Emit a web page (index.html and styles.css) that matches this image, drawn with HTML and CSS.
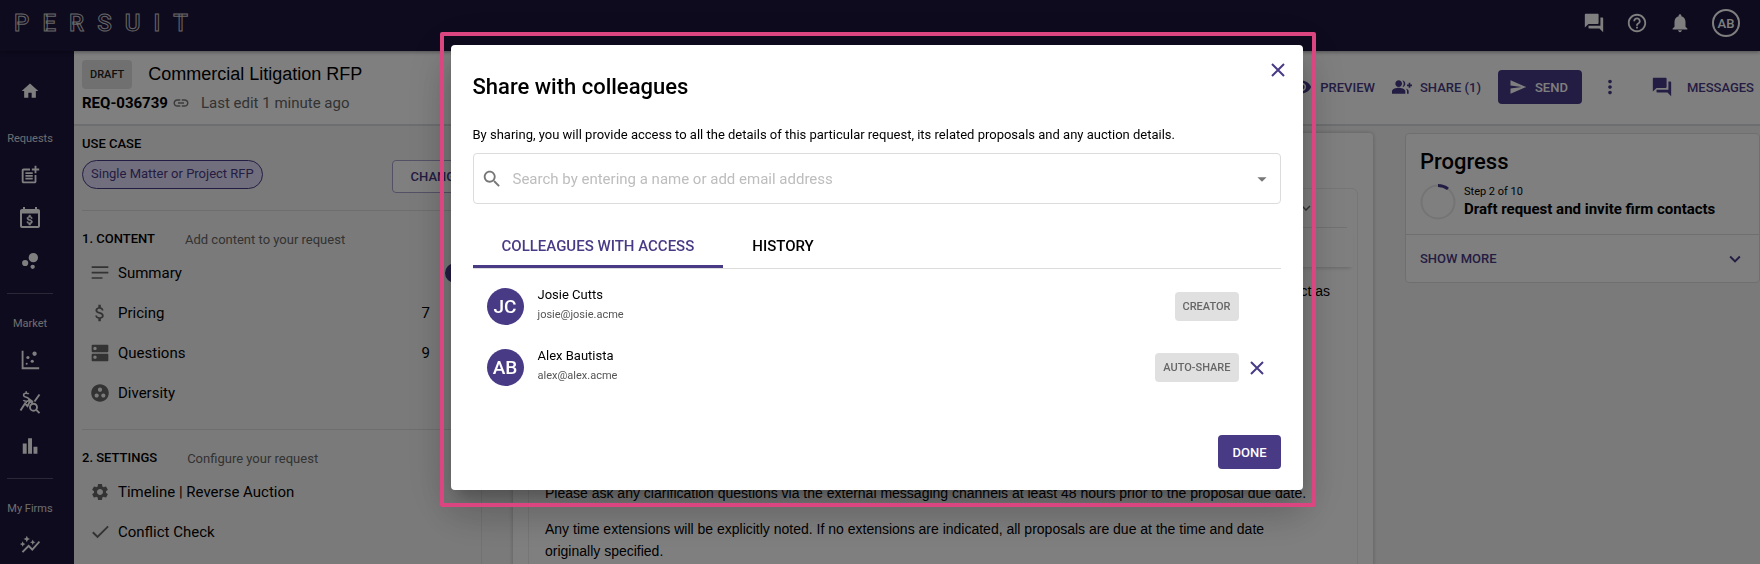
FILE: index.html
```html
<!DOCTYPE html>
<html lang="en">
<head>
<meta charset="utf-8">
<title>Commercial Litigation RFP</title>
<link rel="stylesheet" href="styles.css">
</head>
<body>
<header class="appbar">
  <div class="logo" role="img" aria-label="Persuit"><span>P</span><span>E</span><span>R</span><span>S</span><span>U</span><span>I</span><span>T</span></div>
  <div class="appbar-tools">
    <button class="icon-btn" aria-label="Chat"><svg class="i22" viewBox="0 0 24 24"><path d="M21 6h-2v9H6v2c0 .55.45 1 1 1h11l4 4V7c0-.55-.45-1-1-1zm-4 6V3c0-.55-.45-1-1-1H3c-.55 0-1 .45-1 1v14l4-4h10c.55 0 1-.45 1-1z"/></svg></button>
    <button class="icon-btn" aria-label="Help"><svg class="i22" viewBox="0 0 24 24"><path d="M11 18h2v-2h-2v2zm1-16C6.48 2 2 6.48 2 12s4.48 10 10 10 10-4.48 10-10S17.52 2 12 2zm0 18c-4.41 0-8-3.59-8-8s3.59-8 8-8 8 3.59 8 8-3.59 8-8 8zm0-14c-2.21 0-4 1.79-4 4h2c0-1.1.9-2 2-2s2 .9 2 2c0 2-3 1.75-3 5h2c0-2.25 3-2.5 3-5 0-2.21-1.79-4-4-4z"/></svg></button>
    <button class="icon-btn" aria-label="Notifications"><svg class="i22" viewBox="0 0 24 24"><path d="M12 22c1.1 0 2-.9 2-2h-4c0 1.1.89 2 2 2zm6-6v-5c0-3.07-1.64-5.64-4.5-6.32V4c0-.83-.67-1.5-1.5-1.5s-1.5.67-1.5 1.5v.68C7.63 5.36 6 7.92 6 11v5l-2 2v1h16v-1l-2-2z"/></svg></button>
    <button class="user-btn">AB</button>
  </div>
</header>

<div class="shell">
  <nav class="rail">
    <a href="#" class="rail-link" aria-label="Home"><svg class="i20" viewBox="0 0 24 24"><path d="M10 20v-6h4v6h5v-8h3L12 3 2 12h3v8z"/></svg></a>
    <span class="rail-label">Requests</span>
    <a href="#" class="rail-link" aria-label="New request"><svg class="i22" viewBox="0 0 24 24"><path d="M17 19.22H5V7h7V5H5c-1.1 0-2 .9-2 2v12c0 1.1.9 2 2 2h12c1.1 0 2-.9 2-2v-7h-2v7.22z"/><path d="M19 2h-2v3h-3v2h3v3h2V7h3V5h-3zM7 9h8v2H7zM7 12h8v2H7zM7 15h8v2H7z"/></svg></a>
    <a href="#" class="rail-link" aria-label="Auctions"><svg class="i24" viewBox="0 0 24 24"><path d="M20 3h-1V1h-2v2H7V1H5v2H4c-1.1 0-2 .9-2 2v15c0 1.1.9 2 2 2h16c1.1 0 2-.9 2-2V5c0-1.100-.9-2-2-2zm0 17H4V7.500h16z"/><path transform="translate(5.500 7.600) scale(.54)" d="M11.800 10.900c-2.270-.59-3-1.200-3-2.150 0-1.090 1.010-1.850 2.700-1.850 1.780 0 2.440.85 2.500 2.100h2.210c-.07-1.720-1.120-3.300-3.210-3.810V3h-3v2.160c-1.940.42-3.500 1.680-3.500 3.610 0 2.310 1.910 3.460 4.700 4.130 2.500.6 3 1.480 3 2.410 0 .69-.49 1.790-2.700 1.790-2.060 0-2.870-.92-2.980-2.100h-2.200c.12 2.190 1.760 3.420 3.680 3.830V21h3v-2.150c1.950-.37 3.500-1.500 3.500-3.550 0-2.840-2.430-3.810-4.700-4.400z" stroke="currentColor"/></svg></a>
    <a href="#" class="rail-link" aria-label="Bubbles"><svg class="i20" viewBox="0 0 24 24"><circle cx="6.200" cy="14.400" r="3.700"/><circle cx="15.200" cy="19" r="2.600"/><circle cx="16" cy="8" r="5.600"/></svg></a>
    <hr class="rail-rule">
    <span class="rail-label">Market</span>
    <a href="#" class="rail-link" aria-label="Benchmarks"><svg class="i20" viewBox="0 0 24 24"><path d="M2 1h2.200v19.800H23V23H2z"/><circle cx="17.500" cy="4.500" r="2.600"/><circle cx="9.500" cy="9" r="1.900"/><circle cx="14.700" cy="13.500" r="1.900"/><circle cx="8" cy="16.500" r="1.200"/></svg></a>
    <a href="#" class="rail-link" aria-label="Price search"><svg class="i24" viewBox="0 0 24 24"><g fill="none" stroke="currentColor" stroke-width="1.900"><path d="M2.500 19.500 7 12.500l2.500 2.700 2.500-5 2.500 2"/><path d="M16.500 10.500 21.500 3.500"/><circle cx="15.500" cy="16.200" r="3.500"/><path d="m18 18.700 3.500 3.500"/><path stroke-width="1.600" d="M10.700 3.200C10 2 5.600 1.700 5.600 4.200c0 2.600 5.400 1.500 5.400 4.200 0 2.400-4.800 2.200-5.600.6M8.200.200v2M8.200 10v2M11 8l4 3"/></g></svg></a>
    <a href="#" class="rail-link" aria-label="Reports"><svg class="i20" viewBox="0 0 24 24"><path d="M3.300 9h4.700v12.300H3.300zM9.700 2.700h4.700v18.600H9.700zM16.200 13h4.700v8.300h-4.700z"/></svg></a>
    <hr class="rail-rule">
    <span class="rail-label">My Firms</span>
    <a href="#" class="rail-link" aria-label="Firm insights"><svg class="i22" viewBox="0 0 24 24"><path d="M14.060 9.940 12 9l2.060-.94L15 6l.94 2.060L18 9l-2.060.94L15 12l-.94-2.060zM4 14l.94-2.060L7 11l-2.060-.94L4 8l-.94 2.060L1 11l2.060.94L4 14zm4.500-5 1.090-2.410L12 5.500 9.590 4.410 8.500 2 7.410 4.410 5 5.500l2.410 1.090L8.500 9zm-4 11.500 6-6.010 4 4L23 8.930l-1.410-1.410-7.090 7.970-4-4L3 19l1.500 1.500z"/></svg></a>
  </nav>

  <main class="main">
    <section class="titlebar">
      <div class="titlebar-text">
        <div class="row-title"><span class="tag">DRAFT</span><h1 class="page-title">Commercial Litigation RFP</h1></div>
        <div class="row-meta"><strong class="req-id">REQ-036739</strong><svg class="i18 muted" viewBox="0 0 24 24"><path d="M3.900 12c0-1.710 1.390-3.100 3.100-3.100h4V7H7c-2.760 0-5 2.240-5 5s2.240 5 5 5h4v-1.900H7c-1.710 0-3.100-1.390-3.100-3.100zM8 13h8v-2H8v2zm9-6h-4v1.900h4c1.710 0 3.100 1.390 3.100 3.100s-1.390 3.100-3.100 3.100h-4V17h4c2.760 0 5-2.240 5-5s-2.240-5-5-5z"/></svg><span class="edited">Last edit 1 minute ago</span></div>
      </div>
      <div class="actions">
        <button class="text-btn"><svg class="i20" viewBox="0 0 24 24"><path d="M12 4.500C7 4.500 2.730 7.610 1 12c1.730 4.390 6 7.500 11 7.500s9.270-3.110 11-7.500c-1.730-4.390-6-7.500-11-7.500zM12 17c-2.760 0-5-2.240-5-5s2.240-5 5-5 5 2.240 5 5-2.240 5-5 5zm0-8c-1.660 0-3 1.340-3 3s1.340 3 3 3 3-1.340 3-3-1.340-3-3-3z"/></svg>PREVIEW</button>
        <button class="text-btn"><svg class="i20" viewBox="0 0 24 24"><path d="M22 9V7h-2v2h-2v2h2v2h2v-2h2V9zM8 12c2.210 0 4-1.790 4-4s-1.790-4-4-4-4 1.790-4 4 1.790 4 4 4zm0 1c-2.670 0-8 1.340-8 4v3h16v-3c0-2.660-5.330-4-8-4zM12.510 4.050C13.430 5.110 14 6.490 14 8s-.57 2.890-1.490 3.950C14.470 11.700 16 10.040 16 8s-1.530-3.700-3.490-3.950zM16.530 13.830C17.420 14.660 18 15.700 18 17v3h2v-3c0-1.450-1.590-2.510-3.470-3.170z"/></svg>SHARE (1)</button>
        <button class="solid-btn send"><svg class="i18" viewBox="0 0 24 24"><path d="M2.010 21 23 12 2.010 3 2 10l15 2-15 2z"/></svg>SEND</button>
        <button class="text-btn more" aria-label="More"><svg class="i22" viewBox="0 0 24 24"><path d="M12 8c1.100 0 2-.9 2-2s-.9-2-2-2-2 .9-2 2 .9 2 2 2zm0 2c-1.100 0-2 .9-2 2s.9 2 2 2 2-.9 2-2-.9-2-2-2zm0 6c-1.100 0-2 .9-2 2s.9 2 2 2 2-.9 2-2-.9-2-2-2z"/></svg></button>
        <button class="text-btn messages"><svg class="i22" viewBox="0 0 24 24"><path d="M21 6h-2v9H6v2c0 .55.45 1 1 1h11l4 4V7c0-.55-.45-1-1-1zm-4 6V3c0-.55-.45-1-1-1H3c-.55 0-1 .45-1 1v14l4-4h10c.55 0 1-.45 1-1z"/></svg>MESSAGES</button>
      </div>
    </section>

    <div class="columns">
      <aside class="outline">
        <section class="outline-block use-case">
          <h2 class="block-title">USE CASE</h2>
          <div class="use-row"><span class="chip">Single Matter or Project RFP</span><button class="outline-btn">CHANGE</button></div>
        </section>
        <section class="outline-block">
          <div class="block-head"><h2 class="block-title">1. CONTENT</h2><span class="hint">Add content to your request</span></div>
          <a href="#" class="item"><svg class="i20" viewBox="0 0 24 24"><path d="M2 4h20v2H2zM2 10.500h20v2H2zM2 17h13v2H2z"/></svg><span>Summary</span><b class="bubble"></b></a>
          <a href="#" class="item"><svg class="i20" viewBox="0 0 24 24"><path d="M11.800 10.900c-2.270-.59-3-1.200-3-2.150 0-1.090 1.010-1.850 2.700-1.850 1.780 0 2.440.85 2.500 2.100h2.210c-.07-1.720-1.120-3.300-3.210-3.810V2h-3v3.160c-1.940.42-3.500 1.680-3.500 3.610 0 2.310 1.910 3.460 4.700 4.130 2.500.6 3 1.480 3 2.410 0 .69-.49 1.790-2.700 1.790-2.060 0-2.870-.92-2.980-2.100h-2.200c.12 2.190 1.760 3.420 3.680 3.830V22h3v-3.150c1.950-.37 3.500-1.500 3.500-3.550 0-2.840-2.430-3.810-4.700-4.400z"/></svg><span>Pricing</span><span class="count">7</span></a>
          <a href="#" class="item"><svg class="i20" viewBox="0 0 24 24"><path d="M21 13H3c-.55 0-1 .45-1 1v7c0 .55.45 1 1 1h18c.55 0 1-.45 1-1v-7c0-.55-.45-1-1-1zM6 19c-1.100 0-2-.9-2-2s.9-2 2-2 2 .9 2 2-.9 2-2 2zM21 2H3c-.55 0-1 .45-1 1v7c0 .55.45 1 1 1h18c.55 0 1-.45 1-1V3c0-.55-.45-1-1-1zM6 8.500c-1.100 0-2-.9-2-2s.9-2 2-2 2 .9 2 2-.9 2-2 2z"/></svg><span>Questions</span><span class="count">9</span></a>
          <a href="#" class="item"><svg class="i20" viewBox="0 0 24 24"><path d="M12 1.500C6.200 1.500 1.500 6.200 1.500 12S6.200 22.500 12 22.500 22.500 17.800 22.500 12 17.800 1.500 12 1.500zM8 17.500c-1.380 0-2.500-1.120-2.500-2.500s1.120-2.500 2.500-2.500 2.500 1.120 2.500 2.500-1.120 2.500-2.500 2.500zM9.500 8c0-1.380 1.120-2.500 2.500-2.500s2.500 1.120 2.500 2.500-1.120 2.500-2.500 2.500S9.500 9.380 9.500 8zm6.500 9.500c-1.380 0-2.500-1.120-2.500-2.500s1.120-2.500 2.500-2.500 2.500 1.120 2.500 2.500-1.120 2.500-2.500 2.500z"/></svg><span>Diversity</span></a>
        </section>
        <section class="outline-block">
          <div class="block-head"><h2 class="block-title">2. SETTINGS</h2><span class="hint">Configure your request</span></div>
          <a href="#" class="item"><svg class="i20" viewBox="0 0 24 24"><path d="M19.140 12.940c.04-.3.06-.61.06-.94 0-.32-.02-.64-.07-.94l2.030-1.580c.18-.14.23-.41.12-.61l-1.920-3.320c-.12-.22-.37-.29-.59-.22l-2.390.96c-.5-.38-1.030-.7-1.620-.94l-.36-2.540c-.04-.24-.24-.41-.48-.41h-3.840c-.24 0-.43.17-.47.41l-.36 2.540c-.59.24-1.130.57-1.620.94l-2.390-.96c-.22-.08-.47 0-.59.22L2.740 8.870c-.12.21-.08.47.12.61l2.030 1.580c-.05.3-.09.63-.09.94s.02.64.07.94l-2.030 1.580c-.18.14-.23.41-.12.61l1.920 3.320c.12.22.37.29.59.22l2.390-.96c.5.38 1.030.7 1.620.94l.36 2.540c.05.24.24.41.48.41h3.840c.24 0 .44-.17.47-.41l.36-2.540c.59-.24 1.130-.56 1.620-.94l2.390.96c.22.08.47 0 .59-.22l1.920-3.320c.12-.22.07-.47-.12-.61l-2.010-1.580zM12 15.600c-1.980 0-3.600-1.620-3.600-3.600s1.620-3.600 3.600-3.600 3.600 1.620 3.600 3.600-1.620 3.600-3.600 3.600z"/></svg><span>Timeline | Reverse Auction</span></a>
          <a href="#" class="item"><svg class="i20" viewBox="0 0 24 24"><path d="M9 16.170 4.200 11.400 2.500 13.100 9 19.500 22.500 6 21 4.500z"/></svg><span>Conflict Check</span></a>
        </section>
      </aside>

      <section class="sheet">
        <div class="editor">
          <div class="editor-head"><svg class="i18" viewBox="0 0 24 24"><path d="M16.590 8.590 12 13.170 7.410 8.590 6 10l6 6 6-6z"/></svg></div>
          <div class="editor-tools"></div>
          <div class="editor-body">
            <p class="tail">project as</p>
            <p>Please ask any clarification questions via the external messaging channels at least 48 hours prior to the proposal due date.</p>
            <p>Any time extensions will be explicitly noted. If no extensions are indicated, all proposals are due at the time and date originally specified.</p>
          </div>
        </div>
      </section>

      <aside class="progress">
        <div class="progress-top">
          <h2 class="progress-title">Progress</h2>
          <div class="progress-row">
            <svg class="ring" viewBox="0 0 36 36"><circle cx="18" cy="18" r="16.500" fill="none" stroke="#e8e8e8" stroke-width="2"/><path d="M18 1.500a16.500 16.500 0 0 1 10 3.400" fill="none" stroke="#493a86" stroke-width="3"/></svg>
            <div><div class="step">Step 2 of 10</div><div class="step-name">Draft request and invite firm contacts</div></div>
          </div>
        </div>
        <button class="show-more">SHOW MORE<svg class="i22" viewBox="0 0 24 24"><path d="M16.590 8.590 12 13.170 7.410 8.590 6 10l6 6 6-6z"/></svg></button>
      </aside>
    </div>
  </main>
</div>

<div class="backdrop">
  <div class="dialog" role="dialog" aria-labelledby="dlg-title">
    <div class="focus-frame"></div>
    <button class="close" aria-label="Close"><svg class="i20" viewBox="0 0 20 20"><path class="cross" d="M4 4l12 12M16 4 4 16"/></svg></button>
    <h2 class="dialog-title" id="dlg-title">Share with colleagues</h2>
    <label class="dialog-text" for="who">By sharing, you will provide access to all the details of this particular request, its related proposals and any auction details.</label>
    <div class="search">
      <svg class="i22" viewBox="0 0 24 24"><path d="M15.500 14h-.79l-.28-.27C15.410 12.590 16 11.110 16 9.500 16 5.910 13.090 3 9.500 3S3 5.910 3 9.500 5.910 16 9.500 16c1.610 0 3.090-.59 4.230-1.570l.27.28v.79l5 4.990L20.490 19l-4.990-5zm-6 0C7.010 14 5 11.990 5 9.500S7.010 5 9.500 5 14 7.010 14 9.500 11.990 14 9.500 14z"/></svg>
      <input id="who" type="text" placeholder="Search by entering a name or add email address">
      <button class="icon-btn" aria-label="Open list"><svg class="i22" viewBox="0 0 24 24"><path d="m7 10 5 5 5-5z"/></svg></button>
    </div>
    <div class="tabs" role="tablist">
      <button class="tab active" role="tab" aria-selected="true">COLLEAGUES WITH ACCESS</button>
      <button class="tab" role="tab" aria-selected="false">HISTORY</button>
    </div>
    <ul class="people">
      <li class="person"><span class="avatar">JC</span><div class="who"><div class="name">Josie Cutts</div><div class="email">josie@josie.acme</div></div><span class="tag">CREATOR</span><span class="slot"></span></li>
      <li class="person"><span class="avatar">AB</span><div class="who"><div class="name">Alex Bautista</div><div class="email">alex@alex.acme</div></div><span class="tag">AUTO-SHARE</span><button class="slot" aria-label="Remove"><svg class="i20" viewBox="0 0 20 20"><path class="cross" d="M4 4l12 12M16 4 4 16"/></svg></button></li>
    </ul>
    <div class="dialog-actions"><button class="solid-btn">DONE</button></div>
  </div>
</div>
</body>
</html>
```

FILE: styles.css
```css
* { box-sizing: border-box; }
body {
  margin: 0;
  height: 100vh;
  overflow: hidden;
  display: flex;
  flex-direction: column;
  font-family: Roboto, "Liberation Sans", sans-serif;
  font-size: 13px;
  color: #000;
  background: #f5f5f5;
}
h1, h2, p, ul { margin: 0; padding: 0; }
button { font: inherit; color: inherit; background: none; border: 0; padding: 0; cursor: pointer; }
a { color: inherit; text-decoration: none; }
svg { display: block; fill: currentColor; flex: none; }
.i18 { width: 18px; height: 18px; }
.i20 { width: 20px; height: 20px; }
.i22 { width: 22px; height: 22px; }
.i24 { width: 24px; height: 24px; }
.muted { color: #777; }

.appbar {
  flex: none;
  height: 51px;
  padding: 0 20px 5px 14px;
  display: flex;
  align-items: center;
  justify-content: space-between;
  background: #1e163e;
  color: #fff;
  box-shadow: 0 1px 4px rgba(0, 0, 0, .4);
  z-index: 1;
}
.logo { width: 174px; display: flex; justify-content: space-between; font-size: 24px; font-weight: 500; line-height: 24px; color: transparent; -webkit-text-stroke: 1px #ccc; }
.appbar-tools { display: flex; align-items: center; gap: 21px; }
.user-btn { width: 28px; height: 28px; border: 2px solid #fff; border-radius: 50%; font-weight: 500; }

.shell { flex: 1; min-height: 0; display: flex; }
.rail {
  flex: none;
  width: 74px;
  padding: 30px 14px 0 0;
  display: flex;
  flex-direction: column;
  align-items: center;
  overflow: hidden;
  background: #1e163e;
  color: #fff;
}
.rail-link { flex: none; height: 20px; margin-bottom: 23px; display: flex; align-items: center; }
.rail-label { flex: none; height: 16px; margin: 7px 0 18px; font-size: 11px; line-height: 16px; color: #ddd; }
.rail-rule { flex: none; width: 46px; margin: -1px 0 15px; border: 0; border-top: 1px solid #55506c; }

.main { flex: 1; min-width: 0; display: flex; flex-direction: column; }
.titlebar {
  flex: none;
  height: 75px;
  padding: 9px 6px 0 8px;
  display: flex;
  justify-content: space-between;
  background: #fff;
  border-bottom: 2px solid #d8dcde;
}
.row-title { display: flex; align-items: center; gap: 16px; }
.tag { height: 29px; padding: 0 8px; border-radius: 4px; background: #e0e0e0; color: #666; font-size: 11px; font-weight: 500; line-height: 29px; }
.titlebar .tag { color: #222; }
.page-title { font-family: "Liberation Sans", Arial, sans-serif; font-size: 18px; font-weight: 400; }
.row-meta { margin-top: 4px; display: flex; align-items: center; line-height: 20px; }
.req-id { margin-right: 4px; font-size: 15px; }
.edited { margin-left: 11px; font-size: 15px; color: #666; }
.actions { height: 54px; display: flex; align-items: center; color: #493a86; }
.text-btn { display: flex; align-items: center; gap: 8px; font-weight: 500; margin-right: 17px; }
.solid-btn { height: 34px; padding: 0 14px; border-radius: 4px; background: #493a86; color: #fff; font-weight: 500; }
.send { display: flex; align-items: center; gap: 8px; padding: 0 14px 0 11px; margin-right: 17px; }
.more { margin-right: 30px; }
.messages { gap: 14px; margin-right: 0; }

.columns { flex: 1; min-height: 0; overflow: hidden; display: flex; align-items: flex-start; }
.outline { flex: none; width: 408px; padding-left: 8px; border-right: 1px solid #e4e4e4; }
.outline-block { padding-top: 18px; height: 219px; border-bottom: 1px solid #dcdcdc; }
.outline-block.use-case { padding-top: 8px; height: 85px; }
.outline-block:last-child { border: 0; }
.block-title { font-size: 13px; font-weight: 500; line-height: 20px; }
.use-row { margin-top: 6px; display: flex; justify-content: space-between; align-items: flex-start; }
.chip { height: 29px; padding: 0 8px; border: 1px solid #493a86; border-radius: 15px; background: #e3dffb; color: #493a86; line-height: 25px; }
.outline-btn { width: 89px; height: 33px; border: 1px solid #a8a0cc; border-radius: 4px; background: #fff; color: #493a86; font-weight: 500; }
.block-head { margin-bottom: 4px; display: flex; align-items: center; gap: 30px; }
.hint { color: #666; }
.item { height: 40px; padding-left: 8px; display: flex; align-items: center; gap: 8px; font-size: 15px; }
.item svg { color: #666; }
.count, .bubble { margin-left: auto; }
.count { margin-right: 51px; }
.bubble { width: 20px; height: 20px; margin-right: 16px; border-radius: 50%; background: #493a86; }

.sheet { flex: 1; min-width: 0; margin: 7px 32px 0 31px; padding: 55px 15px 0; background: #fff; border-radius: 4px; box-shadow: 0 0 4px rgba(0, 0, 0, .25); }
.editor { height: 400px; border: 1px solid #ececec; border-radius: 6px; }
.editor-head { height: 39px; margin: 0 10px; padding-right: 32px; display: flex; align-items: center; justify-content: flex-end; color: #666; border-bottom: 1px solid #e4e4e4; }
.editor-tools { height: 39px; margin: 0 4px; box-shadow: 0 3px 4px -2px rgba(0, 0, 0, .2); }
.editor-body { padding: 13px 16px; font-family: "Liberation Sans", Arial, sans-serif; font-size: 14px; line-height: 22px; }
.editor-body p { max-width: 770px; margin-bottom: 14px; }
.editor-body .tail { max-width: none; height: 188px; padding-right: 11px; text-align: right; }

.progress { flex: none; width: 355px; margin-top: 7px; border: 1px solid #dcdfe0; border-radius: 4px; background: #fff; }
.progress-top { padding: 14px; border-bottom: 1px solid #dcdfe0; }
.progress-title { font-size: 22px; font-weight: 500; line-height: 28px; }
.progress-row { margin-top: 8px; display: flex; gap: 8px; }
.ring { width: 36px; height: 36px; }
.step { font-size: 11px; line-height: 16px; }
.step-name { font-size: 15px; font-weight: 700; line-height: 18px; }
.show-more { width: 100%; height: 47px; padding: 0 13px 0 14px; display: flex; align-items: center; justify-content: space-between; color: #493a86; font-weight: 500; }

.backdrop { position: fixed; inset: 0; z-index: 5; padding: 45px 7px 0 0; display: flex; align-items: flex-start; justify-content: center; background: rgba(0, 0, 0, .5); }
.dialog {
  position: relative;
  width: 852px;
  padding: 28px 22px 21px;
  border-radius: 4px;
  background: #fff;
  box-shadow: 0 11px 15px -7px rgba(0, 0, 0, .2), 0 24px 38px 3px rgba(0, 0, 0, .14), 0 9px 46px 8px rgba(0, 0, 0, .12);
}
.focus-frame { position: absolute; inset: -13px -13px -17px -11px; border: 4px solid #db4580; border-radius: 2px; pointer-events: none; }
.close { position: absolute; top: 15px; right: 15px; }
.close, .slot { color: #493a86; }
.cross { fill: none; stroke: currentColor; stroke-width: 2; }
.dialog-title { font-size: 22px; font-weight: 500; line-height: 28px; }
.dialog-text { display: block; margin-top: 24px; line-height: 20px; }
.search { height: 51px; margin-top: 8px; padding: 0 7px; display: flex; align-items: center; gap: 10px; border: 1px solid #dcdcdc; border-radius: 4px; color: #777; }
.search input { flex: 1; min-width: 0; border: 0; outline: 0; padding: 0; font: inherit; font-size: 15px; }
.search input::placeholder { color: #bdbdbd; }
.tabs { margin-top: 19px; display: flex; border-bottom: 1px solid #dcdcdc; }
.tab { height: 45px; padding: 3px 29px 0; border-bottom: 3px solid transparent; font-size: 15px; font-weight: 500; }
.tab.active { border-color: #493a86; color: #493a86; }
.people { margin-top: 7px; list-style: none; }
.person { height: 61px; padding: 0 14px; display: flex; align-items: center; }
.avatar { width: 37px; height: 37px; border-radius: 50%; background: #493a86; color: #fff; font-size: 19px; font-weight: 500; line-height: 37px; text-align: center; }
.who { flex: 1; margin-left: 14px; padding-bottom: 4px; line-height: 20px; }
.email { font-size: 11px; color: #555; }
.slot { width: 20px; margin-left: 8px; }
.dialog-actions { margin-top: 37px; display: flex; justify-content: flex-end; }
```
